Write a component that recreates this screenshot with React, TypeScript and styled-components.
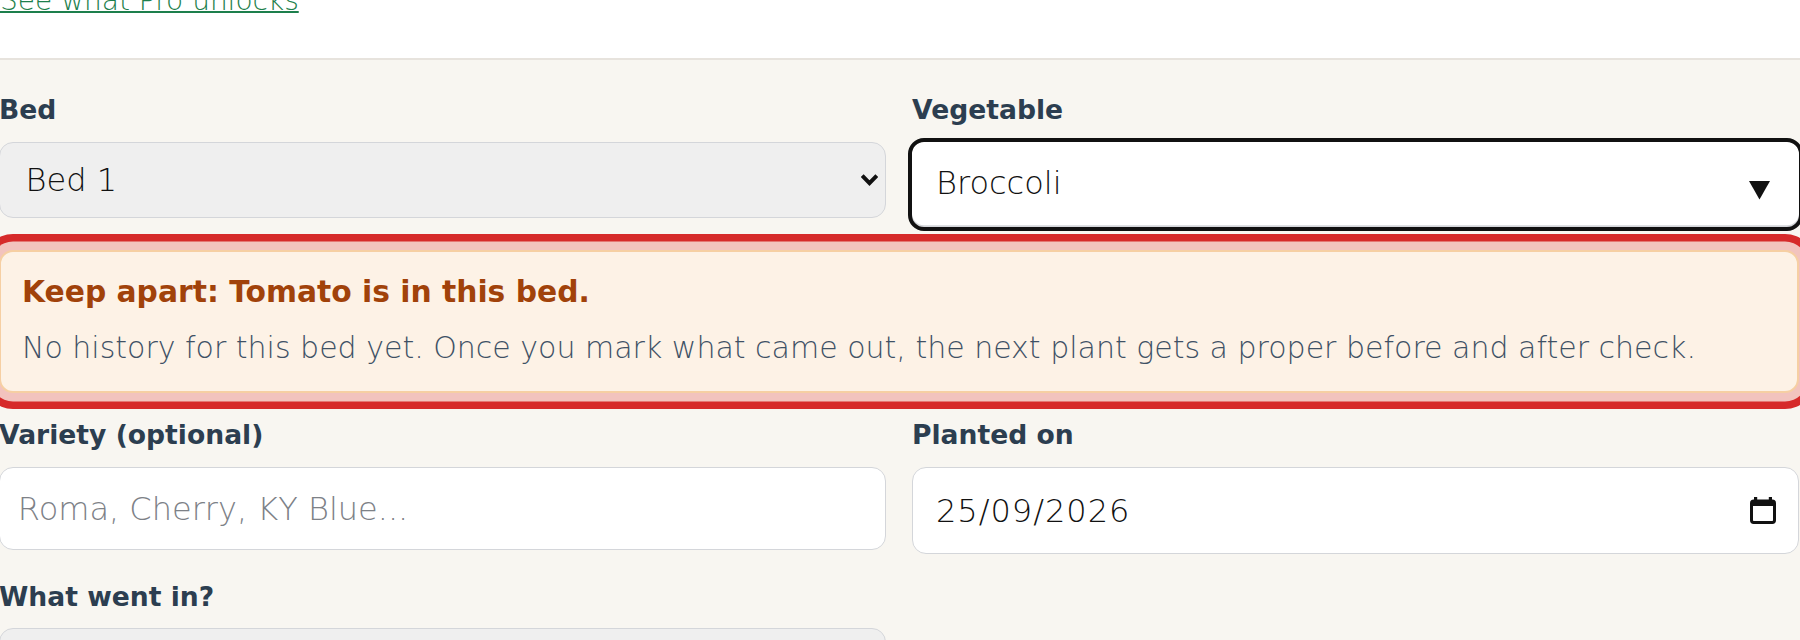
import React from "react";
import styled, { createGlobalStyle } from "styled-components";

const GlobalStyle = createGlobalStyle`
  html, body {
    margin: 0;
    padding: 0;
    background: #ffffff;
  }
  body {
    font-family: "DejaVu Sans", "Liberation Sans", sans-serif;
    overflow: hidden;
  }
  * {
    box-sizing: border-box;
  }
`;

const palette = {
  green: "#1d7f4c",
  cream: "#f8f6f1",
  rule: "#e7e3dd",
  label: "#2c3e50",
  ink: "#111111",
  field: "#efefef",
  fieldBorder: "#d4d6da",
  placeholder: "#7d8187",
  warnFill: "#fdf2e6",
  warnBorder: "#f6cfa3",
  warnTitle: "#a1420a",
  warnText: "#3f5165",
  ringSoft: "#f2c3be",
  ringHard: "#d62a2a",
};

const TopBar = styled.div`
  background: #ffffff;
  border-bottom: 2px solid ${palette.rule};
  padding-bottom: 41.2px;
`;

const ProLink = styled.a`
  display: block;
  margin-top: -16.5px;
  font-size: 28px;
  font-weight: 200;
  line-height: normal;
  color: ${palette.green};
  text-decoration: underline;
  text-decoration-thickness: 1.75px;
  cursor: pointer;
`;

const FormArea = styled.div`
  background: ${palette.cream};
  padding-top: 35.6px;
  padding-bottom: 80px;
`;

const Form = styled.div`
  display: flex;
  flex-direction: column;
  margin: 0 1px 0 -1px;
`;

const FieldRow = styled.div<{ $spaceTop?: number }>`
  display: grid;
  grid-template-columns: 1fr 1fr;
  column-gap: 26px;
  align-items: start;
  margin-top: ${(p) => p.$spaceTop ?? 0}px;
`;

const Field = styled.div`
  display: flex;
  flex-direction: column;
  min-width: 0;
`;

const Label = styled.label`
  font-size: 26.6px;
  font-weight: 700;
  line-height: 30.5px;
  color: ${palette.label};
  margin-bottom: 16px;
`;

const SelectWrap = styled.div`
  position: relative;
`;

const NativeSelect = styled.select`
  appearance: none;
  -webkit-appearance: none;
  display: block;
  width: 100%;
  height: 76px;
  margin: 0;
  padding: 0 48px 0 25.5px;
  background: ${palette.field};
  border: 1.75px solid ${palette.fieldBorder};
  border-radius: 14px;
  font-family: inherit;
  font-size: 32px;
  font-weight: 200;
  color: ${palette.ink};
  outline: none;
`;

const Chevron = styled.svg`
  position: absolute;
  right: 7.5px;
  top: 50%;
  transform: translateY(-50%);
  pointer-events: none;
`;

const ComboTrigger = styled.button`
  display: flex;
  align-items: center;
  justify-content: space-between;
  width: 100%;
  height: 85.4px;
  margin: 0;
  padding: 0 29px 3.6px 24px;
  background: #ffffff;
  border: none;
  border-radius: 12px;
  outline: 4.3px solid ${palette.ink};
  box-shadow: inset 0 -1.75px 0 ${palette.fieldBorder};
  font-family: inherit;
  font-size: 32px;
  font-weight: 200;
  line-height: normal;
  color: ${palette.ink};
  text-align: left;
`;

const Caret = styled.svg`
  margin-top: 16px;
  flex-shrink: 0;
`;

const CompanionAlert = styled.div`
  margin-top: 22.4px;
  padding: 22.8px 21px 26px 21px;
  background: ${palette.warnFill};
  border: 2px solid ${palette.warnBorder};
  border-radius: 14px;
  box-shadow: 0 0 0 8.5px ${palette.ringSoft}, 0 0 0 16px ${palette.ringHard};
`;

const AlertTitle = styled.div`
  font-size: 29.75px;
  font-weight: 700;
  line-height: normal;
  color: ${palette.warnTitle};
`;

const AlertText = styled.p`
  margin: 20.4px 0 0;
  font-size: 30px;
  font-weight: 200;
  line-height: normal;
  color: ${palette.warnText};
  white-space: nowrap;
`;

const TextInput = styled.input`
  display: block;
  width: 100%;
  height: 83.3px;
  margin: 0;
  padding: 0 16px 0 17.85px;
  background: #ffffff;
  border: 1.75px solid ${palette.fieldBorder};
  border-radius: 14px;
  font-family: inherit;
  font-size: 32px;
  font-weight: 200;
  color: ${palette.ink};
  outline: none;

  &::placeholder {
    color: ${palette.placeholder};
  }
`;

const DateField = styled.div`
  display: flex;
  align-items: center;
  justify-content: space-between;
  height: 87.3px;
  padding: 0 22.3px 0 23px;
  background: #ffffff;
  border: 1.75px solid ${palette.fieldBorder};
  border-radius: 14px;
`;

const DateText = styled.span`
  font-size: 32px;
  font-weight: 200;
  letter-spacing: 1px;
  color: ${palette.ink};
`;

const CalendarIcon = () => (
  <svg width="26" height="27" viewBox="0 0 26 27">
    <rect x="4" y="0" width="3.2" height="4" fill="#111" />
    <rect x="18.8" y="0" width="3.2" height="4" fill="#111" />
    <rect
      x="1.5"
      y="4"
      width="23"
      height="21.5"
      rx="2.2"
      fill="none"
      stroke="#111"
      strokeWidth="3"
    />
    <rect x="1.5" y="3" width="23" height="6" rx="1.5" fill="#111" />
  </svg>
);

const SelectChevron = () => (
  <Chevron width="19" height="13" viewBox="0 0 19 13">
    <path
      d="M2.2 2.2 L9.5 9.6 L16.8 2.2"
      fill="none"
      stroke="#111"
      strokeWidth="4"
    />
  </Chevron>
);

export default function App() {
  return (
    <>
      <GlobalStyle />
      <TopBar>
        <ProLink>See what Pro unlocks</ProLink>
      </TopBar>
      <FormArea>
        <Form>
          <FieldRow>
            <Field>
              <Label>Bed</Label>
              <SelectWrap>
                <NativeSelect defaultValue="bed-1">
                  <option value="bed-1">Bed 1</option>
                  <option value="bed-2">Bed 2</option>
                </NativeSelect>
                <SelectChevron />
              </SelectWrap>
            </Field>
            <Field>
              <Label>Vegetable</Label>
              <ComboTrigger type="button">
                <span>Broccoli</span>
                <Caret width="21" height="18.4" viewBox="0 0 21 18.4">
                  <polygon points="0,0 21,0 10.5,18.4" fill="#111" />
                </Caret>
              </ComboTrigger>
            </Field>
          </FieldRow>

          <CompanionAlert>
            <AlertTitle>Keep apart: Tomato is in this bed.</AlertTitle>
            <AlertText>
              No history for this bed yet. Once you mark what came out, the
              next plant gets a proper before and after check.
            </AlertText>
          </CompanionAlert>

          <FieldRow $spaceTop={27.7}>
            <Field>
              <Label>Variety (optional)</Label>
              <TextInput placeholder="Roma, Cherry, KY Blue..." />
            </Field>
            <Field>
              <Label>Planted on</Label>
              <DateField>
                <DateText>25/09/2026</DateText>
                <CalendarIcon />
              </DateField>
            </Field>
          </FieldRow>

          <FieldRow $spaceTop={27.7}>
            <Field>
              <Label>What went in?</Label>
              <SelectWrap>
                <NativeSelect defaultValue="">
                  <option value="">Pick one</option>
                </NativeSelect>
                <SelectChevron />
              </SelectWrap>
            </Field>
          </FieldRow>
        </Form>
      </FormArea>
    </>
  );
}
